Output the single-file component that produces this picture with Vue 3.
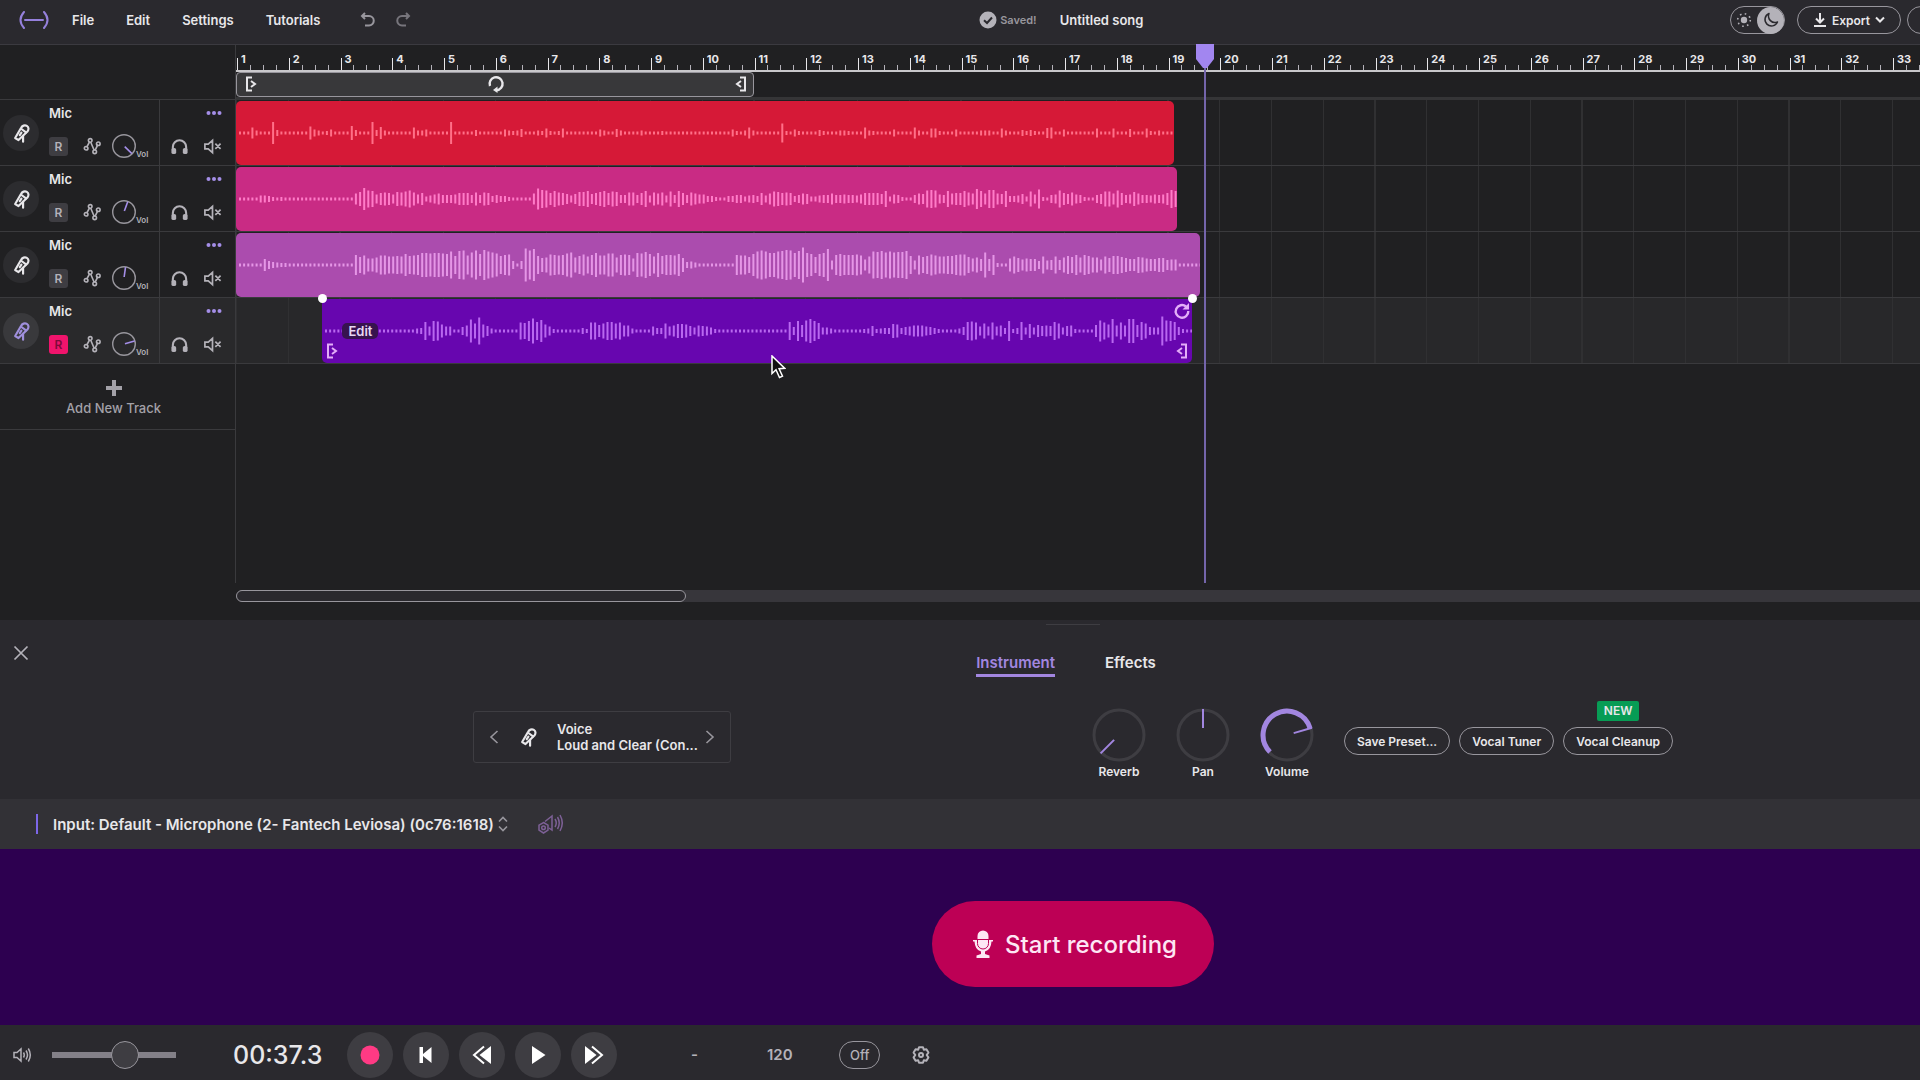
<script setup>
import { ref, computed } from 'vue';

// horizontal zoom: pixels per bar, and per waveform sample
const barWidth = 207 / 4;
const sampleWidth = barWidth / 12.5;
const laneCentre = 32;

const bars = Array.from({ length: 33 }, (_, i) => i + 1);
const playhead = ref(18.7);
const loop = ref({ start: 0, length: 10 });

const masterVolume = ref(61);
const darkMode = ref(true);
const songTitle = ref('Untitled song');
const tempo = ref('120');
const activeTab = ref('Instrument');
const selectedTrack = ref(4);

// one base-36 digit per sample, the digit is the height of the stroke in pixels
const tracks = ref([
  {
    id: 1, name: 'Mic', armed: false, volume: 134, color: 'red', start: 0, length: 18.13,
    wave: '333b5333m6 3333333d75 3473333e63 33m6c53333 33b5573333 3m33333633 3333754583 3354943493 3333333753 3853333533 3343333333 3333333337 435b533333 3j43743333 6433355433 3b54333373 333b533994 3337333335 5533953336 46433ab337 3333333933 3933383339 4353333',
  },
  {
    id: 2, name: 'Mic', armed: false, volume: 20, color: 'pink', start: 0, length: 18.19,
    wave: '3333377643 4333333333 33333333be mhg9cdc9ed fhd9c579b8 889ccc8d8d c686643333 3blihcgdca 7aeegacegc fe88dd8cg7 dbd7f8gc8d b996643366 885786c7bf ecdc68ba55 788b889887 9ccccag598 4338bahih9 8gbccgdbkg biibag667a 5f9j4389hc ad984338af fbhc89eb88 7989cig3',
  },
  {
    id: 3, name: 'Mic', armed: false, volume: 8, color: 'violet', start: 0, length: 18.63,
    wave: '333333c865 4433333333 33333333kg jddfjjhhih mijkoonoon mristjptmu rpnikl838x twieflkjkn pfilhkojjn nfklkdonqm hoikkjme67 5333333333 kjjgmrtroo rsutoszomg mow9kmkkkl jbhrqsprpq qsi9jgiljh hiikllgdfc pck433dheb dcc8h9ahaf igkfkiffbh eiigeccgfd cceeabb333 333',
  },
  {
    id: 4, name: 'Mic', armed: true, volume: 74, color: 'purple', start: 1.67, length: 16.81,
    wave: '3333333333 3333333333 3356i9kjd9 9338bnfrda 5333333hgk pimd943333 3364hhcfii fhbb533339 66f9beeda7 ba97433333 3333333333 33i8kclokg 7753333333 45a4566ed6 89bbb98643 33358ijh9f 9h9b6k46i7 e7cabaif7a b43333clhd obhboocif8 77tlki8433',
  },
]);

const knobs = ref([
  { name: 'Reverb', angle: -135, min: -135 },
  { name: 'Pan', angle: 0, min: 0 },
  { name: 'Volume', angle: 74, min: -135 },
]);

const timelineVars = computed(() => ({ '--bar': barWidth + 'px' }));

function span(item) {
  return {
    marginLeft: item.start * barWidth + 'px',
    width: item.length * barWidth + 'px',
  };
}

function wavePath(wave) {
  return [...wave.replaceAll(' ', '')]
    .map((digit, i) => {
      const height = parseInt(digit, 36);
      const x = (4 + i * sampleWidth).toFixed(1);
      return `M${x} ${laneCentre - height / 2}v${height}`;
    })
    .join('');
}

function onCircle(angle, r) {
  const rad = ((angle - 90) * Math.PI) / 180;
  return `${(27 + r * Math.cos(rad)).toFixed(1)} ${(27 + r * Math.sin(rad)).toFixed(1)}`;
}

function arcPath(knob) {
  const large = knob.angle - knob.min > 180 ? 1 : 0;
  return `M${onCircle(knob.min, 24)}A24 24 0 ${large} 1 ${onCircle(knob.angle, 24)}`;
}
</script>

<template>
  <div class="app">
    <svg class="symbols" aria-hidden="true">
      <symbol id="mic" viewBox="0 0 24 24">
        <g fill="none" stroke="currentColor" stroke-width="2.6" stroke-linejoin="round" stroke-linecap="round">
          <path d="M12 6C13.500 3.200 16.500 2 19 3.500s2.500 4.300.7 6.800L9 20.500l-4-2.500z" />
          <path d="M13 7.500l5 3.700M10.500 14.500l2-3M14.500 15.500v7" />
        </g>
      </symbol>
      <symbol id="nodes" viewBox="0 0 20 20">
        <g fill="none" stroke="currentColor" stroke-width="1.8">
          <path d="M4 11.500 7.500 5M8.500 5.500l4 9.500M13.500 14.500l3-6" />
          <circle cx="3.5" cy="12.5" r="2" /><circle cx="8" cy="3.8" r="2" />
          <circle cx="13" cy="16.5" r="2" /><circle cx="17" cy="7.500" r="2" />
        </g>
      </symbol>
      <symbol id="headphones" viewBox="0 0 20 20">
        <path d="M3 14v-3.500a7 7 0 0 1 14 0V14" fill="none" stroke="currentColor" stroke-width="2.2" />
        <rect x="1.5" y="11.5" width="5" height="6.5" rx="2" fill="currentColor" />
        <rect x="13.5" y="11.5" width="5" height="6.5" rx="2" fill="currentColor" />
      </symbol>
      <symbol id="mute" viewBox="0 0 20 20">
        <path d="M2 7.500h3.500L10 3.500v13l-4.500-4H2zM13 7l5.500 5.500M18.500 7 13 12.500" fill="none" stroke="currentColor" stroke-width="1.8" />
      </symbol>
      <symbol id="speaker" viewBox="0 0 20 20">
        <path d="M2 7.500h3L9 4v12l-4-3.500H2zM11.500 7.500q1.500 2.500 0 5M14 5.500q3 4.500 0 9M16.300 3.500q4 6.500 0 13" fill="none" stroke="currentColor" stroke-width="1.5" />
      </symbol>
      <symbol id="trim-start" viewBox="0 0 12 16">
        <path d="M7 1.500H2v13h5M6 5l4 3-4 3" fill="none" stroke="currentColor" stroke-width="2" />
      </symbol>
      <symbol id="trim-end" viewBox="0 0 12 16">
        <path d="M5 1.500h5v13H5M6 5 2 8l4 3" fill="none" stroke="currentColor" stroke-width="2" />
      </symbol>
    </svg>

    <header class="topbar">
      <nav class="menu">
        <a href="#" class="logo" aria-label="Home">
          <svg width="32" height="18" viewBox="0 0 32 18" fill="none" stroke="currentColor" stroke-width="2">
            <path d="M6 1Q-1 9 6 17M26 1q7 8 0 16M7 9h18" stroke-linecap="round" />
          </svg>
        </a>
        <button>File</button>
        <button>Edit</button>
        <button>Settings</button>
        <button>Tutorials</button>
        <div class="history">
          <button aria-label="Undo">
            <svg width="16" height="16" viewBox="0 0 16 16" fill="none" stroke="currentColor" stroke-width="2">
              <path d="M5 1 2 4l3 3M2 4h7a4.500 4.500 0 0 1 0 9.500H5" />
            </svg>
          </button>
          <button aria-label="Redo" class="dim">
            <svg width="16" height="16" viewBox="0 0 16 16" fill="none" stroke="currentColor" stroke-width="2">
              <path d="M11 1l3 3-3 3M14 4H7a4.500 4.500 0 0 0 0 9.500h4" />
            </svg>
          </button>
        </div>
      </nav>
      <div class="song">
        <svg width="18" height="18" viewBox="0 0 18 18">
          <circle cx="9" cy="9" r="8.5" fill="#b4b2b9" />
          <path d="M5 9.300l3 2.700 5-5.500" fill="none" stroke="#2a292e" stroke-width="2" />
        </svg>
        <span class="saved">Saved!</span>
        <input v-model="songTitle" class="title" type="text" aria-label="Song title" />
      </div>
      <div class="actions">
        <label class="theme">
          <input v-model="darkMode" type="checkbox" aria-label="Dark mode" />
          <svg width="16" height="16" viewBox="0 0 16 16" fill="#b4b2b9">
            <circle cx="8" cy="8" r="3.2" />
            <circle cx="8" cy="8" r="6.3" fill="none" stroke="#b4b2b9" stroke-width="1.6" stroke-dasharray="1.6 3.35" />
          </svg>
          <span class="moon">
            <svg width="16" height="16" viewBox="0 0 16 16" fill="none" stroke="#2a292e" stroke-width="1.5" stroke-linejoin="round">
              <path d="M6 1.500A6.500 6.500 0 1 0 14.500 10 6.500 6.500 0 0 1 6 1.500z" />
            </svg>
          </span>
        </label>
        <button class="pill export">
          <svg width="14" height="14" viewBox="0 0 14 14" fill="none" stroke="currentColor" stroke-width="2">
            <path d="M7 0v9M3 5.500l4 4 4-4M1 13h12" />
          </svg>
          Export
          <svg width="10" height="8" viewBox="0 0 10 8" fill="none" stroke="currentColor" stroke-width="2">
            <path d="M1 1.500l4 4 4-4" />
          </svg>
        </button>
        <button class="pill share" aria-label="Share"></button>
      </div>
    </header>

    <main class="workspace" :style="timelineVars">
      <section class="tracks">
        <div
          v-for="track in tracks"
          :key="track.id"
          class="track"
          :class="{ selected: track.id === selectedTrack }"
          @click="selectedTrack = track.id"
        >
          <span class="avatar"><svg width="20" height="20"><use href="#mic" /></svg></span>
          <div class="main">
            <span class="name">{{ track.name }}</span>
            <div class="tools">
              <button class="arm" :class="{ on: track.armed }" @click="track.armed = !track.armed">R</button>
              <button aria-label="Automation"><svg width="18" height="18"><use href="#nodes" /></svg></button>
              <label class="volume">
                <svg width="24" height="24" viewBox="0 0 24 24" fill="none">
                  <circle cx="12" cy="12" r="11.3" stroke="#98969d" stroke-width="1.4" />
                  <path d="M12 11V1" stroke="#a48ee8" stroke-width="1.6" :transform="`rotate(${track.volume} 12 12)`" />
                </svg>
                <span>Vol</span>
                <input v-model.number="track.volume" type="range" min="-135" max="135" />
              </label>
            </div>
          </div>
          <div class="side">
            <button class="more" aria-label="More">
              <svg width="16" height="6" viewBox="0 0 16 6" fill="currentColor">
                <circle cx="2.5" cy="3" r="2" /><circle cx="8" cy="3" r="2" /><circle cx="13.5" cy="3" r="2" />
              </svg>
            </button>
            <div class="tools">
              <button aria-label="Solo"><svg width="19" height="19"><use href="#headphones" /></svg></button>
              <button aria-label="Mute"><svg width="19" height="19"><use href="#mute" /></svg></button>
            </div>
          </div>
        </div>
        <button class="add-track">
          <svg width="16" height="16" viewBox="0 0 16 16" stroke="currentColor" stroke-width="4"><path d="M8 0v16M0 8h16" /></svg>
          Add New Track
        </button>
      </section>

      <section class="timeline">
        <div class="ruler">
          <div v-for="bar in bars" :key="bar" class="bar">
            <span class="number">{{ bar }}</span>
            <div class="ticks">
              <i v-for="beat in 4" :key="beat"></i>
            </div>
          </div>
        </div>
        <div class="loop-row">
          <div class="loop" :style="span(loop)">
            <svg width="12" height="16"><use href="#trim-start" /></svg>
            <svg width="18" height="18" viewBox="0 0 18 18" fill="none" stroke="currentColor" stroke-width="2.4">
              <path d="M3 11A6.500 6.500 0 1 1 9.500 15.200" /><path d="M10.500 11.500v6.500L6 15z" fill="currentColor" stroke="none" />
            </svg>
            <svg width="12" height="16"><use href="#trim-end" /></svg>
          </div>
        </div>
        <div class="lanes">
          <div v-for="track in tracks" :key="track.id" class="lane" :class="{ selected: track.id === selectedTrack }">
            <div class="clip" :class="track.color" :style="span(track)">
              <svg class="wave" width="100%" height="64"><path :d="wavePath(track.wave)" /></svg>
              <template v-if="track.id === selectedTrack">
                <i class="fade left"></i>
                <i class="fade right"></i>
                <button class="edit">Edit</button>
                <svg class="corner trim-left" width="12" height="16"><use href="#trim-start" /></svg>
                <svg class="corner trim-right" width="12" height="16"><use href="#trim-end" /></svg>
                <svg class="corner repeat" width="18" height="18" viewBox="0 0 18 18" fill="none" stroke="currentColor" stroke-width="2.4">
                  <path d="M13 4.500A6.300 6.300 0 1 0 15.300 9" /><path d="M16 1v6.500H9.500z" fill="currentColor" stroke="none" />
                </svg>
              </template>
            </div>
          </div>
        </div>
        <div class="scrollbar"><div class="thumb"></div></div>
        <svg class="playhead" width="18" height="539" :style="{ left: playhead * barWidth - 8 + 'px' }">
          <rect x="8" y="20" width="2" height="519" fill="#7465ab" />
          <path d="M0 0h18v15l-7 9H7l-7-9z" fill="#a286f0" />
        </svg>
        <svg class="cursor" width="15" height="24" viewBox="0 0 15 24">
          <path d="M1 1v17.500l4-3.700 3.500 7.700 3-1.400-3.400-7.400 5.500-.4z" fill="#111" stroke="#fff" stroke-width="1.5" />
        </svg>
      </section>
    </main>

    <section class="editor">
      <i class="grip"></i>
      <button class="close" aria-label="Close">
        <svg width="16" height="16" viewBox="0 0 16 16" stroke="currentColor" stroke-width="1.7"><path d="M1.500 1.500l13 13M14.500 1.500l-13 13" /></svg>
      </button>
      <div class="tabs">
        <button v-for="tab in ['Instrument', 'Effects']" :key="tab" :class="{ active: tab === activeTab }" @click="activeTab = tab">
          {{ tab }}
        </button>
      </div>
      <div class="controls">
        <div class="preset">
          <button aria-label="Previous preset">
            <svg width="10" height="16" viewBox="0 0 10 16" fill="none" stroke="currentColor" stroke-width="1.6"><path d="M8.500 2 2 8l6.500 6" /></svg>
          </button>
          <svg width="20" height="20"><use href="#mic" /></svg>
          <div class="preset-name">
            <span>Voice</span>
            <span>Loud and Clear (Con...</span>
          </div>
          <button aria-label="Next preset">
            <svg width="10" height="16" viewBox="0 0 10 16" fill="none" stroke="currentColor" stroke-width="1.6"><path d="M1.500 2 8 8l-6.500 6" /></svg>
          </button>
        </div>
        <div class="sound">
          <label v-for="knob in knobs" :key="knob.name" class="knob">
            <svg width="54" height="54" viewBox="0 0 54 54" fill="none">
              <circle cx="27" cy="27" r="25" stroke="#3e3d42" stroke-width="3" />
              <path v-if="knob.angle > knob.min" :d="arcPath(knob)" stroke="#a286e0" stroke-width="5" />
              <path :d="`M${onCircle(knob.angle, 7)}L${onCircle(knob.angle, 26)}`" stroke="#a286e0" stroke-width="2" />
            </svg>
            <span>{{ knob.name }}</span>
            <input v-model.number="knob.angle" type="range" min="-135" max="135" />
          </label>
          <div class="buttons">
            <button class="pill">Save Preset...</button>
            <button class="pill">Vocal Tuner</button>
            <div class="new-feature">
              <span class="badge">NEW</span>
              <button class="pill">Vocal Cleanup</button>
            </div>
          </div>
        </div>
      </div>
    </section>

    <section class="input-bar">
      <i class="level"></i>
      <select aria-label="Input device">
        <option>Input: Default - Microphone (2- Fantech Leviosa) (0c76:1618)</option>
      </select>
      <svg class="arrows" width="12" height="16" viewBox="0 0 12 16" fill="none" stroke="currentColor" stroke-width="1.6">
        <path d="M2 5.500l4-4 4 4M2 10.500l4 4 4-4" />
      </svg>
      <button class="monitor" aria-label="Monitoring settings">
        <svg width="26" height="20" viewBox="0 0 26 20" fill="none" stroke="currentColor" stroke-width="1.5">
          <path d="M6.500 8.500l4.500 2.700v5L6.500 19 2 16.200v-5z" /><circle cx="6.5" cy="13.7" r="1.8" />
          <path d="M8 7.500 15 2v14l-3-2M18 5q2.500 4 0 8M20.500 3q3.500 6 0 12M23 1q4.500 8 0 16" />
        </svg>
      </button>
    </section>

    <section class="record-area">
      <button class="start">
        <svg width="22" height="28" viewBox="0 0 22 28" fill="currentColor">
          <path d="M5.500 9V6a5.500 5.500 0 0 1 11 0v3zM1 10h20v1.500h-1.500Q19 20 13 21.500V24l4.500 1.500V28h-13v-2.500L9 24v-2.500Q3 20 2.500 11.500H1z" />
          <path d="M5.500 10v3.500a5.500 5.500 0 0 0 11 0V10" fill="none" stroke="#bd0055" stroke-width="1" />
        </svg>
        Start recording
      </button>
    </section>

    <footer class="transport">
      <div class="master">
        <svg width="20" height="20"><use href="#speaker" /></svg>
        <input v-model="masterVolume" type="range" aria-label="Master volume" />
      </div>
      <time class="clock">00:37.3</time>
      <div class="keys">
        <button aria-label="Record"><svg width="22" height="22"><circle cx="11" cy="11" r="9.5" fill="#ff3a84" /></svg></button>
        <button aria-label="To start">
          <svg width="22" height="22" viewBox="0 0 22 22" fill="currentColor"><path d="M4.500 3H8v7l8.500-7v16L8 12v7H4.500z" /></svg>
        </button>
        <button aria-label="Rewind">
          <svg width="22" height="22" viewBox="0 0 22 22" fill="currentColor">
            <path d="M20 2v18L8.500 11z" /><path d="M13 2.500 3 11l10 8.500" fill="none" stroke="currentColor" stroke-width="2" />
          </svg>
        </button>
        <button aria-label="Play"><svg width="22" height="22" viewBox="0 0 22 22" fill="currentColor"><path d="M5 2v18l13.500-9z" /></svg></button>
        <button aria-label="Fast forward">
          <svg width="22" height="22" viewBox="0 0 22 22" fill="currentColor">
            <path d="M2 2v18l11.500-9z" /><path d="M9 2.500 19 11 9 19.500" fill="none" stroke="currentColor" stroke-width="2" />
          </svg>
        </button>
      </div>
      <span class="key-signature">-</span>
      <input v-model="tempo" class="tempo" type="text" aria-label="Tempo" />
      <button class="pill off">Off</button>
      <button class="settings" aria-label="Metronome settings">
        <svg width="18" height="18" viewBox="0 0 18 18" fill="none" stroke="currentColor" stroke-width="2">
          <path d="M7 1.200h4l.8 2.500 2.600-.5 2 3.400L14.700 9l1.700 2.400-2 3.400-2.600-.5-.8 2.500H7l-.8-2.500-2.600.5-2-3.400L3.300 9 1.600 6.600l2-3.400 2.600.5z" stroke-linejoin="round" />
          <circle cx="9" cy="9" r="2" />
        </svg>
      </button>
    </footer>
  </div>
</template>

<style>
body {
  margin: 0;
  background: #202022;
  overflow: hidden;
}
</style>

<style scoped>
.app {
  /* the centred parts sit right of the middle by half of this */
  --shift: 226px;
  display: flex;
  flex-direction: column;
  min-height: 100vh;
  overflow: hidden;
  background: #202022;
  color: #e8e7ea;
  font-family: Inter, 'Liberation Sans', sans-serif;
  font-size: 13px;
  font-weight: 600;
}
.app * {
  box-sizing: border-box;
}
.symbols {
  display: none;
}
svg {
  display: block;
  flex-shrink: 0;
}
button,
input,
select {
  margin: 0;
  padding: 0;
  border: 0;
  background: none;
  color: inherit;
  font: inherit;
  outline: none;
}
button {
  cursor: pointer;
}
.pill {
  height: 28px;
  padding: 0 12px;
  border: 1px solid #98969d;
  border-radius: 14px;
  white-space: nowrap;
}

.topbar {
  display: flex;
  align-items: center;
  height: 45px;
  padding-bottom: 4px;
  border-bottom: 1px solid #3b3a40;
  background: #2a292e;
}
.menu {
  display: flex;
  align-items: center;
  gap: 32px;
  flex: 0 0 51%;
  padding-left: 18px;
}
.logo {
  color: #9580dc;
  margin-right: -10px;
}
.history {
  display: flex;
  gap: 19px;
  margin-left: 8px;
  color: #98969d;
}
.history .dim {
  color: #77757c;
}
.song {
  display: flex;
  align-items: center;
  gap: 3px;
}
.saved {
  color: #98969d;
  font-size: 11px;
}
.title {
  width: 120px;
  margin-left: 20px;
}
.actions {
  display: flex;
  align-items: center;
  gap: 6px;
  margin-left: auto;
}
.theme {
  position: relative;
  display: flex;
  align-items: center;
  justify-content: space-between;
  width: 55px;
  height: 28px;
  margin-right: 6px;
  padding-left: 5px;
  border: 1px solid #98969d;
  border-radius: 14px;
}
.theme input,
.volume input,
.knob input {
  position: absolute;
  inset: 0;
  width: 100%;
  height: 100%;
  opacity: 0;
}
.moon {
  display: flex;
  align-items: center;
  justify-content: center;
  width: 27px;
  height: 27px;
  border-radius: 50%;
  background: #b4b2b9;
}
.export {
  display: flex;
  align-items: center;
  justify-content: center;
  gap: 5px;
  width: 104px;
  padding: 0;
  font-size: 12px;
}
.share {
  width: 104px;
  margin-right: -91px;
}

.workspace {
  display: flex;
  flex: 1;
}
.tracks {
  flex: 0 0 236px;
  padding-top: 54px;
  border-right: 1px solid #3a3a3d;
  margin-bottom: 37px;
}
.track {
  display: grid;
  grid-template-columns: 49px 110px 1fr;
  height: 66px;
  border-top: 1px solid #3a3a3d;
}
.track.selected {
  background: #29292b;
}
.avatar {
  display: flex;
  align-items: center;
  justify-content: center;
  align-self: center;
  width: 36px;
  height: 36px;
  margin-left: 3px;
  border-radius: 50%;
  background: #2c2c2f;
}
.selected .avatar {
  background: #39393c;
  color: #9f8fdc;
}
.main,
.side {
  display: flex;
  flex-direction: column;
  justify-content: space-between;
  padding: 5px 0 7px;
}
.side {
  padding: 10px 13px 9px 10px;
  border-left: 1px solid #3a3a3d;
}
.name {
  line-height: 16px;
}
.tools {
  display: flex;
  align-items: center;
  justify-content: space-between;
  color: #b4b2b9;
}
.main .tools {
  justify-content: flex-start;
  gap: 15px;
}
.arm {
  width: 19px;
  height: 19px;
  border-radius: 3px;
  background: #3e3d42;
  font-size: 12px;
}
.arm.on {
  background: #f0146c;
  color: #7d0a3a;
}
.volume {
  position: relative;
  display: flex;
  align-items: flex-end;
  margin-left: -4px;
  font-size: 8px;
  line-height: 8px;
}
.more {
  align-self: flex-end;
  color: #a48ee8;
}
.add-track {
  display: flex;
  flex-direction: column;
  align-items: center;
  justify-content: center;
  gap: 4px;
  width: 100%;
  height: 67px;
  padding: 2px 8px 0 0;
  border: solid #3a3a3d;
  border-width: 1px 0;
  color: #a3a1a8;
  font-weight: 500;
}

.timeline {
  position: relative;
  display: flex;
  flex: 1;
  flex-direction: column;
  min-width: 0;
  padding-bottom: 18px;
}
.ruler {
  display: flex;
  height: 27px;
  padding-left: 1px;
  border-bottom: 2px solid #c9c8cb;
  overflow: hidden;
}
.bar {
  display: grid;
  flex: 0 0 var(--bar);
  height: 25px;
}
.number,
.ticks {
  grid-area: 1 / 1;
}
.number {
  padding: 7px 0 0 4px;
  font-size: 11px;
  font-weight: 700;
  line-height: 14px;
}
.ticks {
  display: grid;
  grid-template-columns: repeat(4, 1fr);
  align-items: end;
}
.ticks i {
  height: 5px;
  border-left: 1px solid #b4b2b9;
}
.ticks i:first-child {
  height: 12px;
  border-color: #e8e7ea;
}
.loop-row {
  height: 28px;
  border-bottom: 3px solid #353537;
}
.loop {
  display: flex;
  align-items: center;
  justify-content: space-between;
  height: 25px;
  padding: 0 6px 2px 8px;
  border: 1px solid #98969d;
  border-radius: 4px;
  background: #38383a;
}
.lanes {
  flex: 1;
}
.lane {
  height: 66px;
  padding-top: 1px;
  border-bottom: 1px solid #3a3a3d;
  background: repeating-linear-gradient(90deg, #303032 0 1px, transparent 1px var(--bar));
}
.lane.selected {
  background-color: #28282a;
}
.clip {
  position: relative;
  height: 64px;
  border-radius: 5px;
}
.wave path {
  fill: none;
  stroke: currentColor;
  stroke-width: 2;
}
.red {
  background: #d61937;
  color: #ff7088;
}
.pink {
  background: #c92b84;
  color: #ff7cc8;
}
.violet {
  background: #ab4cae;
  color: #e596e6;
}
.purple {
  border-radius: 0 0 5px 5px;
  background: #6706af;
  color: #b968f0;
}
.fade {
  position: absolute;
  top: -5px;
  width: 9px;
  height: 9px;
  border-radius: 50%;
  background: #fff;
}
.fade.left {
  left: -4px;
}
.fade.right {
  right: -5px;
}
.edit {
  position: absolute;
  top: 24px;
  left: 20px;
  padding: 0 6px;
  border-radius: 5px;
  background: #37134f;
  color: #e8d8f4;
  line-height: 16px;
}
.corner {
  position: absolute;
  color: #e3aef8;
}
.trim-left {
  bottom: 4px;
  left: 4px;
}
.trim-right {
  right: 4px;
  bottom: 4px;
}
.repeat {
  top: 3px;
  right: 1px;
}
.scrollbar {
  height: 12px;
  border-radius: 6px 0 0 6px;
  background: #37363b;
}
.thumb {
  width: 450px;
  max-width: 27%;
  height: 100%;
  border: 1px solid #98969d;
  border-radius: 6px;
  background: #2a292e;
}
.playhead {
  position: absolute;
  top: -1px;
}
.cursor {
  position: absolute;
  top: 310px;
  left: 535px;
}

.editor {
  position: relative;
  display: flex;
  flex-direction: column;
  align-items: center;
  height: 179px;
  padding: 31px 0 0 var(--shift);
  background: #2a292e;
}
.grip {
  position: absolute;
  top: 4px;
  width: 54px;
  height: 1px;
  background: #3e3d42;
}
.close {
  position: absolute;
  top: 25px;
  left: 13px;
  color: #b4b2b9;
}
.tabs {
  display: flex;
  gap: 50px;
  margin-right: 14px;
  font-size: 15px;
}
.tabs button {
  height: 26px;
  padding-bottom: 1px;
  border-bottom: 3px solid transparent;
}
.tabs .active {
  border-color: #a286e0;
  color: #a286e0;
}
.controls {
  display: flex;
  justify-content: space-between;
  width: 100%;
  max-width: 1200px;
  margin-top: 24px;
}
.preset {
  display: flex;
  align-items: center;
  gap: 19px;
  width: 258px;
  height: 52px;
  margin-top: 10px;
  padding: 0 15px;
  border: 1px solid #3e3d42;
  border-radius: 3px;
}
.preset button {
  color: #98969d;
}
.preset-name {
  flex: 1;
  min-width: 0;
  margin-right: -12px;
  line-height: 16px;
  white-space: nowrap;
}
.preset-name span {
  display: block;
}
.sound {
  display: flex;
  margin-top: 7px;
}
.knob {
  position: relative;
  display: flex;
  flex-direction: column;
  align-items: center;
  gap: 2px;
  width: 54px;
  margin-right: 30px;
  font-size: 12px;
}
.buttons {
  display: flex;
  align-items: flex-start;
  gap: 9px;
  padding-top: 19px;
  font-size: 12px;
}
.new-feature {
  position: relative;
  display: flex;
  justify-content: center;
}
.badge {
  position: absolute;
  top: -26px;
  padding: 0 7px;
  border-radius: 2px;
  background: #079c55;
  line-height: 20px;
}

.input-bar {
  display: flex;
  align-items: center;
  height: 50px;
  padding-left: 36px;
  background: #323136;
}
.level {
  width: 2px;
  height: 20px;
  margin-right: 15px;
  background: #7c66e8;
}
.input-bar select {
  appearance: none;
  font-size: 15px;
}
.arrows {
  margin: 0 28px 0 3px;
  color: #98969d;
}
.monitor {
  color: #7d6096;
}

.record-area {
  display: flex;
  align-items: center;
  justify-content: center;
  height: 176px;
  padding: 14px 0 0 var(--shift);
  background: #2d0050;
}
.start {
  display: flex;
  align-items: center;
  gap: 11px;
  height: 86px;
  padding: 0 37px 0 40px;
  border-radius: 43px;
  background: #bd0055;
  color: #fde6f4;
  font-size: 24px;
  font-weight: 500;
}

.transport {
  display: flex;
  align-items: center;
  height: 55px;
  padding: 4px 0 0 12px;
  background: #2a292e;
  color: #b4b2b9;
}
.master {
  display: flex;
  align-items: center;
  gap: 20px;
}
.master input {
  appearance: none;
  width: 124px;
  height: 28px;
}
.master input::-webkit-slider-runnable-track {
  height: 6px;
  background: #838088;
}
.master input::-webkit-slider-thumb {
  appearance: none;
  width: 28px;
  height: 28px;
  margin-top: -11px;
  border: 1px solid #98969d;
  border-radius: 50%;
  background: #3e3d42;
}
.clock {
  width: 114px;
  margin-left: 57px;
  color: #e8e7ea;
  font-size: 25px;
  font-weight: 500;
}
.keys {
  display: flex;
  gap: 10px;
  color: #fff;
}
.keys button {
  display: flex;
  align-items: center;
  justify-content: center;
  width: 46px;
  height: 46px;
  border-radius: 50%;
  background: #3e3d42;
}
.key-signature {
  width: 76px;
  margin-left: 74px;
  font-size: 15px;
}
.tempo {
  width: 72px;
  font-size: 15px;
}
.off {
  padding: 0 10px;
  font-weight: 500;
}
.settings {
  margin-left: 32px;
}
</style>
